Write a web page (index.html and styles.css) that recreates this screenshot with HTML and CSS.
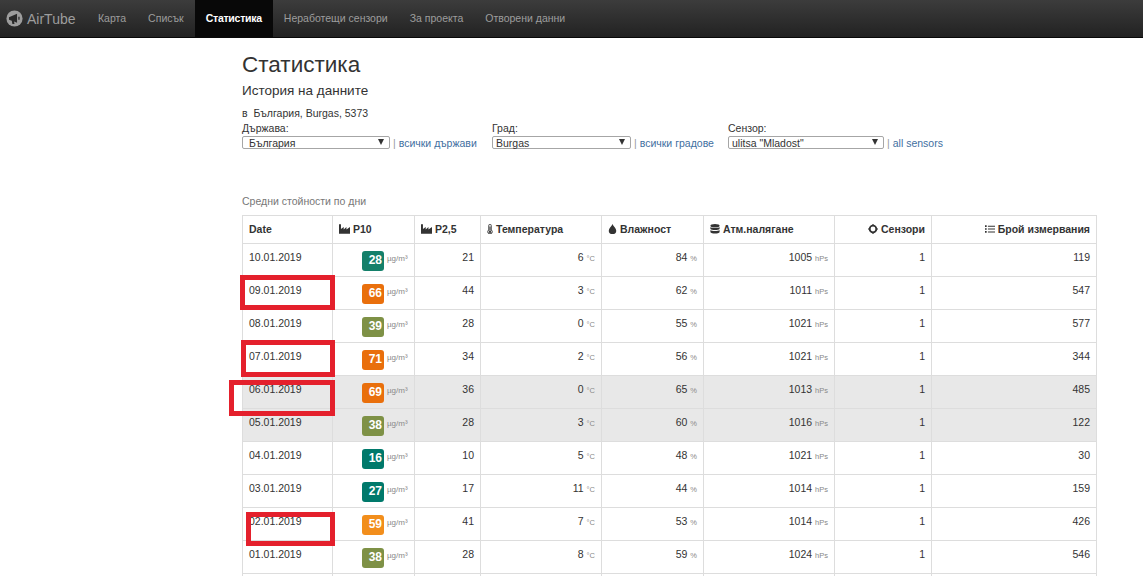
FILE: index.html
```html
<!DOCTYPE html>
<html lang="bg">
<head>
    <meta charset="UTF-8">
    <title>AirTube</title>
    <link rel="stylesheet" href="styles.css">
</head>
<body>
    <nav class="navbar">
        <a class="brand">
            <svg class="brand_logo" viewBox="0 0 20 20"><circle cx="10" cy="10" r="9.500" fill="#9d9d9d"/><path d="M3.500 8.500 L13 4.500 L13 15 L9.500 13.500 L10 16.500 L7.500 16.500 L6.800 12.500 L3.500 11.500Z" fill="#2a2a2a"/><path d="M14.500 8h1.500v3.500h-1.500z" fill="#2a2a2a"/></svg>
            AirTube
        </a>
        <a class="nav_item">Карта</a>
        <a class="nav_item">Списък</a>
        <a class="nav_item active">Статистика</a>
        <a class="nav_item">Неработещи сензори</a>
        <a class="nav_item">За проекта</a>
        <a class="nav_item">Отворени данни</a>
    </nav>
    <div class="container">
        <h1>Статистика</h1>
        <h2>История на данните</h2>
        <p class="location">в&nbsp; България, Burgas, 5373</p>
        <div class="filters">
            <div class="filter filter_country">
                <label>Държава:</label>
                <div class="filter_row"><span class="select select_country">България</span><span class="sep">|</span><a>всички държави</a></div>
            </div>
            <div class="filter filter_city">
                <label>Град:</label>
                <div class="filter_row"><span class="select select_city">Burgas</span><span class="sep">|</span><a>всички градове</a></div>
            </div>
            <div class="filter">
                <label>Сензор:</label>
                <div class="filter_row"><span class="select select_sensor">ulitsa "Mladost"</span><span class="sep">|</span><a>all sensors</a></div>
            </div>
        </div>
        <p class="caption">Средни стойности по дни</p>
        <table>
            <colgroup>
                <col style="width:90px"><col style="width:82px"><col style="width:66px"><col style="width:121px"><col style="width:102px"><col style="width:131px"><col style="width:97px"><col style="width:165px">
            </colgroup>
            <thead>
                <tr>
                    <th>Date</th>
                    <th><svg class="icon" viewBox="0 0 14 12"><path d="M0 0h2.500v6L6 3.500v3L9.500 3.500v3L14 3.500V12H0z"/></svg>P10</th>
                    <th><svg class="icon" viewBox="0 0 14 12"><path d="M0 0h2.500v6L6 3.500v3L9.500 3.500v3L14 3.500V12H0z"/></svg>P2,5</th>
                    <th><svg class="icon icon_thin" viewBox="0 0 6 12"><path fill-rule="evenodd" d="M3 0a2 2 0 0 1 2 2v5a3 3 0 1 1-4 0V2a2 2 0 0 1 2-2zm0 1a1 1 0 0 0-1 1v5.500a2 2 0 1 0 2 0V2a1 1 0 0 0-1-1z"/><path d="M2.300 3h1.400v5h-1.400z"/><circle cx="3" cy="9.500" r="1.300"/></svg>Температура</th>
                    <th><svg class="icon icon_drop" viewBox="0 0 10 12"><path d="M5 0C6 3 9.500 5 9.500 8a4.500 4 0 0 1-9 0C.5 5 4 3 5 0z"/></svg>Влажност</th>
                    <th><svg class="icon icon_db" viewBox="0 0 11 12"><ellipse cx="5.500" cy="2" rx="5.500" ry="2"/><path d="M0 3.500c1 1.500 10 1.500 11 0V6c-1 1.700-10 1.700-11 0zM0 7.200c1 1.500 10 1.500 11 0v2.600c-1 2.200-10 2.200-11 0z"/></svg>Атм.налягане</th>
                    <th class="num"><svg class="icon icon_db" viewBox="0 0 12 12"><circle cx="6" cy="6" r="4" fill="none" stroke="#333" stroke-width="2.200"/><path d="M5.300 0h1.400v2H5.300zM5.300 10h1.400v2H5.300zM0 5.300h2v1.400H0zM10 5.300h2v1.400h-2z"/></svg>Сензори</th>
                    <th class="num"><svg class="icon icon_db" viewBox="0 0 12 12"><path d="M0 1.500h2v2H0zM0 5h2v2H0zM0 8.500h2v2H0zM3.500 2h8.500v1.200H3.500zM3.500 5.400h8.500v1.200H3.500zM3.500 8.900h8.500v1.200H3.500z"/></svg>Брой измервания</th>
                </tr>
            </thead>
            <tbody>
                <tr><td>10.01.2019</td><td class="num"><span class="badge b_green">28</span><small class="wide">µg/m³</small></td><td class="num">21</td><td class="num">6<small>°C</small></td><td class="num">84<small>%</small></td><td class="num">1005<small>hPs</small></td><td class="num">1</td><td class="num">119</td></tr>
                <tr><td>09.01.2019</td><td class="num"><span class="badge b_orange">66</span><small class="wide">µg/m³</small></td><td class="num">44</td><td class="num">3<small>°C</small></td><td class="num">62<small>%</small></td><td class="num">1011<small>hPs</small></td><td class="num">1</td><td class="num">547</td></tr>
                <tr><td>08.01.2019</td><td class="num"><span class="badge b_olive">39</span><small class="wide">µg/m³</small></td><td class="num">28</td><td class="num">0<small>°C</small></td><td class="num">55<small>%</small></td><td class="num">1021<small>hPs</small></td><td class="num">1</td><td class="num">577</td></tr>
                <tr><td>07.01.2019</td><td class="num"><span class="badge b_orange">71</span><small class="wide">µg/m³</small></td><td class="num">34</td><td class="num">2<small>°C</small></td><td class="num">56<small>%</small></td><td class="num">1021<small>hPs</small></td><td class="num">1</td><td class="num">344</td></tr>
                <tr class="grey"><td>06.01.2019</td><td class="num"><span class="badge b_orange">69</span><small class="wide">µg/m³</small></td><td class="num">36</td><td class="num">0<small>°C</small></td><td class="num">65<small>%</small></td><td class="num">1013<small>hPs</small></td><td class="num">1</td><td class="num">485</td></tr>
                <tr class="grey"><td>05.01.2019</td><td class="num"><span class="badge b_olive">38</span><small class="wide">µg/m³</small></td><td class="num">28</td><td class="num">3<small>°C</small></td><td class="num">60<small>%</small></td><td class="num">1016<small>hPs</small></td><td class="num">1</td><td class="num">122</td></tr>
                <tr><td>04.01.2019</td><td class="num"><span class="badge b_teal">16</span><small class="wide">µg/m³</small></td><td class="num">10</td><td class="num">5<small>°C</small></td><td class="num">48<small>%</small></td><td class="num">1021<small>hPs</small></td><td class="num">1</td><td class="num">30</td></tr>
                <tr><td>03.01.2019</td><td class="num"><span class="badge b_teal">27</span><small class="wide">µg/m³</small></td><td class="num">17</td><td class="num">11<small>°C</small></td><td class="num">44<small>%</small></td><td class="num">1014<small>hPs</small></td><td class="num">1</td><td class="num">159</td></tr>
                <tr><td>02.01.2019</td><td class="num"><span class="badge b_amber">59</span><small class="wide">µg/m³</small></td><td class="num">41</td><td class="num">7<small>°C</small></td><td class="num">53<small>%</small></td><td class="num">1014<small>hPs</small></td><td class="num">1</td><td class="num">426</td></tr>
                <tr><td>01.01.2019</td><td class="num"><span class="badge b_olive">38</span><small class="wide">µg/m³</small></td><td class="num">28</td><td class="num">8<small>°C</small></td><td class="num">59<small>%</small></td><td class="num">1024<small>hPs</small></td><td class="num">1</td><td class="num">546</td></tr>
                <tr class="cut"><td></td><td></td><td></td><td></td><td></td><td></td><td></td><td></td></tr>
            </tbody>
        </table>
    </div>
    <div class="mark mark_1"></div>
    <div class="mark mark_2"></div>
    <div class="mark mark_3"></div>
    <div class="mark mark_4"></div>
</body>
</html>
```

FILE: styles.css
```css
* {
    margin: 0;
    padding: 0;
    box-sizing: border-box;
}
html, body {
    height: 576px;
    overflow: hidden;
}
body {
    font-family: "Liberation Sans", Arial, sans-serif;
    font-size: 10.5px;
    color: #333;
    background: #fff;
}
a {
    text-decoration: none;
}
.navbar {
    display: flex;
    height: 38px;
    background: linear-gradient(to bottom, #3c3c3c, #222);
    border-bottom: 1px solid #080808;
}
.brand {
    display: flex;
    align-items: center;
    gap: 4px;
    width: 87px;
    padding-left: 6px;
    font-size: 14px;
    color: #9d9d9d;
}
.brand_logo {
    width: 17px;
    height: 17px;
}
.nav_item {
    padding: 12px 11px 0;
    font-size: 10.5px;
    color: #9d9d9d;
}
.nav_item.active {
    color: #fff;
    font-weight: bold;
    letter-spacing: -0.25px;
    background: #080808;
}
.container {
    width: 855px;
    margin-left: 242px;
}
h1 {
    margin-top: 14px;
    font-size: 22.500px;
    font-weight: 400;
    line-height: 26px;
}
h2 {
    margin-top: 5px;
    font-size: 13.500px;
    font-weight: 400;
    line-height: 15px;
}
.location {
    margin-top: 9px;
    line-height: 13px;
}
.filters {
    display: flex;
    margin-top: 2px;
}
.filter_country {
    width: 250px;
}
.filter_city {
    width: 236px;
}
.filter label {
    display: block;
    line-height: 13px;
}
.filter_row {
    display: flex;
    align-items: center;
    height: 13px;
    margin-top: 1px;
}
.filter a {
    color: #3f6f9f;
}
.sep {
    margin: 0 3px;
    color: #999;
}
.select {
    position: relative;
    display: block;
    height: 13px;
    padding-left: 6px;
    line-height: 13px;
    border: 1px solid #a6a6a6;
    border-radius: 2px;
    color: #333;
}
.select::after {
    content: "";
    position: absolute;
    top: 2px;
    right: 5px;
    border-top: 6px solid #333;
    border-left: 3.500px solid transparent;
    border-right: 3.500px solid transparent;
}
.select_country {
    width: 148px;
}
.select_city {
    width: 139px;
    padding-left: 3px;
}
.select_sensor {
    width: 156px;
    padding-left: 3px;
}
.caption {
    margin-top: 46px;
    line-height: 13px;
    color: #777;
}
table {
    width: 854px;
    margin-top: 7px;
    table-layout: fixed;
    border-collapse: collapse;
}
th, td {
    border: 1px solid #ddd;
    padding: 7px 6px 0;
    text-align: left;
    vertical-align: top;
}
th {
    height: 28px;
    font-weight: bold;
}
td {
    height: 33px;
}
.cut td {
    height: 2px;
    padding: 0;
    border-bottom: 0;
}
.num {
    text-align: right;
}
.grey td {
    background: #e8e8e8;
}
.badge {
    display: inline-block;
    width: 22px;
    height: 20px;
    padding-right: 2px;
    line-height: 19px;
    border-radius: 3px;
    font-size: 12px;
    font-weight: bold;
    color: #fff;
    text-align: right;
    vertical-align: top;
}
.b_green { background: #14806a; }
.b_teal { background: #00796b; }
.b_olive { background: #7e9146; }
.b_orange { background: #e96f0c; }
.b_amber { background: #f28e1c; }
small {
    margin-left: 3px;
    font-size: 7.500px;
    color: #888;
}
small.wide {
    display: inline-block;
    width: 21px;
    margin-left: 3px;
    font-size: 8px;
    text-align: left;
}
.icon {
    display: inline-block;
    width: 11px;
    height: 10px;
    margin-right: 3px;
    vertical-align: -1px;
    fill: #333;
}
.icon_thin {
    width: 6px;
}
.icon_drop {
    width: 9px;
}
.icon_db {
    width: 10px;
}
.mark {
    position: absolute;
    border: 5px solid #e4202c;
}
.mark_1 {
    left: 240px;
    top: 275px;
    width: 95px;
    height: 35px;
}
.mark_2 {
    left: 241px;
    top: 340px;
    width: 94px;
    height: 37px;
}
.mark_3 {
    left: 229px;
    top: 380px;
    width: 106px;
    height: 36px;
}
.mark_4 {
    left: 246px;
    top: 512px;
    width: 89px;
    height: 34px;
}
```
